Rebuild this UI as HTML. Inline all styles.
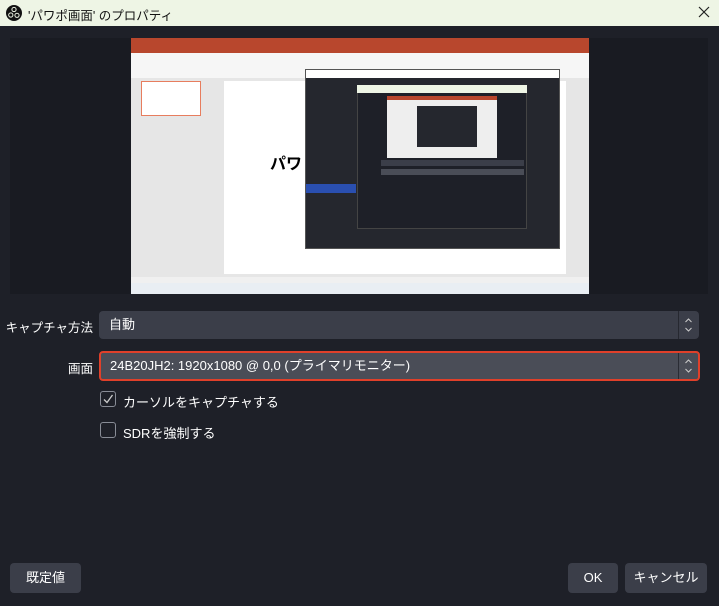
<!DOCTYPE html>
<html><head><meta charset="utf-8"><style>
*{margin:0;padding:0;box-sizing:border-box}
body{width:719px;height:606px;background:#1e2028;font-family:"Liberation Sans","Noto Sans CJK JP",sans-serif;position:relative;overflow:hidden;color:#fff;font-size:13px}
.a{position:absolute}
.title{left:0;top:0;width:719px;height:26px;background:#eef5e5;color:#111;font-size:13px}
.combo{border-radius:4px;background:#3b3e49;height:28px;padding-left:10px;line-height:28px;font-size:13px}
.btn{background:#3b3e49;border-radius:4px;height:30px;line-height:30px;text-align:center;font-size:13px}
.cb{width:16px;height:16px;border:1px solid #888c96;border-radius:3px}
</style></head><body>
<div class="a title">
  <svg class="a" style="left:6px;top:5px" width="16" height="16" viewBox="0 0 16 16"><circle cx="8" cy="8" r="8" fill="#111"/><circle cx="8" cy="4.5" r="2.6" fill="#eef5e5"/><circle cx="4.8" cy="10" r="2.6" fill="#eef5e5"/><circle cx="11" cy="10.3" r="2.6" fill="#eef5e5"/><circle cx="8" cy="4.5" r="1.6" fill="#111"/><circle cx="4.8" cy="10" r="1.6" fill="#111"/><circle cx="11" cy="10.3" r="1.6" fill="#111"/></svg>
  <div class="a" style="left:28px;top:5px;font-size:12.5px">'パワポ画面' のプロパティ</div>
  <svg class="a" style="left:698px;top:6px" width="12" height="12" viewBox="0 0 12 12"><path d="M1 1L11 11M11 1L1 11" stroke="#222" stroke-width="1.2"/></svg>
</div>
<div class="a" style="left:10px;top:38px;width:698px;height:256px;background:#191b22"></div>
<div class="a" style="left:131px;top:38px;width:458px;height:256px;background:#e6e6e6;overflow:hidden">
  <div class="a" style="left:0;top:0;width:458px;height:15px;background:#b8472d"></div>
  <div class="a" style="left:0;top:15px;width:458px;height:25px;background:#f6f6f6"></div>
  <div class="a" style="left:10px;top:43px;width:60px;height:35px;background:#fff;border:1px solid #e77d5e"></div>
  <div class="a" style="left:93px;top:43px;width:342px;height:193px;background:#fff"></div>
  <div class="a" style="left:139px;top:112px;font-size:16px;font-weight:bold;color:#000">パワ</div>
  <div class="a" style="left:174px;top:31px;width:255px;height:180px;background:#25272e;border:1px solid #555"></div>
  <div class="a" style="left:175px;top:32px;width:253px;height:8px;background:#fff"></div>
  <div class="a" style="left:175px;top:146px;width:50px;height:9px;background:#2a4fb0"></div>
  <div class="a" style="left:226px;top:47px;width:170px;height:144px;background:#1e2028;border:1px solid #444"></div>
  <div class="a" style="left:226px;top:47px;width:170px;height:8px;background:#eef5e5"></div>
  <div class="a" style="left:256px;top:58px;width:110px;height:62px;background:#eee"></div>
  <div class="a" style="left:256px;top:58px;width:110px;height:4px;background:#b8472d"></div>
  <div class="a" style="left:286px;top:68px;width:60px;height:41px;background:#25272e"></div>
  <div class="a" style="left:250px;top:122px;width:143px;height:6px;background:#3b3e49"></div>
  <div class="a" style="left:250px;top:131px;width:143px;height:6px;background:#4a4d57"></div>
  <div class="a" style="left:0;top:239px;width:458px;height:6px;background:#f0f0f0"></div>
  <div class="a" style="left:0;top:245px;width:458px;height:11px;background:#e9eef3"></div>
</div>
<div class="a" style="left:0;top:317px;width:93px;text-align:right;font-size:12.5px">キャプチャ方法</div>
<div class="a combo" style="left:99px;top:311px;width:600px">自動</div>
<div class="a" style="left:678px;top:311px;width:1px;height:28px;background:#262830"></div>
<svg class="a" style="left:684px;top:317px" width="9" height="16" viewBox="0 0 9 16"><path d="M1.5 5L4.5 2L7.5 5M1.5 11L4.5 14L7.5 11" stroke="#ccc" fill="none"/></svg>
<div class="a" style="left:0;top:358px;width:93px;text-align:right;font-size:12.5px">画面</div>
<div class="a combo" style="left:99px;top:351px;width:601px;height:30px;background:#4a4d57;border:2px solid #e0402a;line-height:26px;padding-left:9px">24B20JH2: 1920x1080 @ 0,0 (プライマリモニター)</div>
<div class="a" style="left:678px;top:353px;width:1px;height:26px;background:#2a2c34"></div>
<svg class="a" style="left:684px;top:358px" width="9" height="16" viewBox="0 0 9 16"><path d="M1.5 5L4.5 2L7.5 5M1.5 11L4.5 14L7.5 11" stroke="#ccc" fill="none"/></svg>
<div class="a cb" style="left:100px;top:391px"></div>
<svg class="a" style="left:101px;top:392px" width="14" height="14" viewBox="0 0 14 14"><path d="M3 7.5L6 10.5L11.5 3" stroke="#ccc" stroke-width="1.3" fill="none"/></svg>
<div class="a" style="left:123px;top:392px">カーソルをキャプチャする</div>
<div class="a cb" style="left:100px;top:422px"></div>
<div class="a" style="left:123px;top:423px">SDRを強制する</div>
<div class="a btn" style="left:10px;top:563px;width:71px">既定値</div>
<div class="a btn" style="left:568px;top:563px;width:50px">OK</div>
<div class="a btn" style="left:625px;top:563px;width:82px">キャンセル</div>
</body></html>
